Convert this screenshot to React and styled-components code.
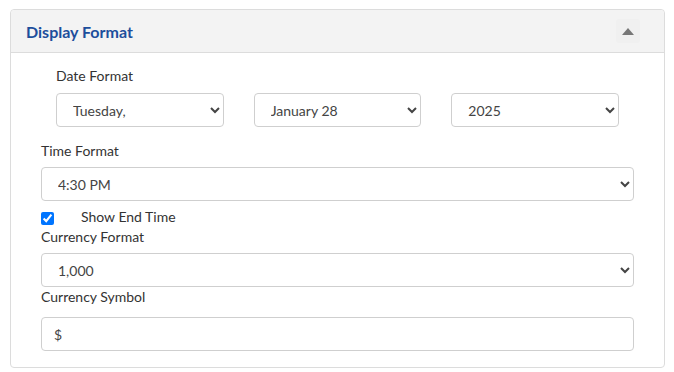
import React, { useState } from 'react'
import styled, { createGlobalStyle } from 'styled-components'

const GlobalStyle = createGlobalStyle`
  body {
    margin: 0;
    background: #fff;
    font-family: Lato, "Liberation Sans", sans-serif;
    font-size: 14px;
    color: #333;
  }
`

const Page = styled.div`
  padding: 9px 9px 0 10px;
`

const Panel = styled.section`
  border: 1px solid #dcdcdc;
  border-radius: 4px;
  background: #fff;
`

const Header = styled.header`
  display: flex;
  align-items: center;
  justify-content: space-between;
  height: 42px;
  padding: 0 24px 0 15px;
  background: #f3f3f3;
  border-bottom: 1px solid #dcdcdc;
  border-radius: 4px 4px 0 0;
`

const Title = styled.h2`
  margin: 0;
  font-size: 16px;
  font-weight: 700;
  color: #1d4e9c;
`

const Toggle = styled.button`
  display: flex;
  align-items: center;
  justify-content: center;
  width: 24px;
  height: 24px;
  padding: 0;
  border: none;
  border-radius: 3px;
  background: #f0f0f0;
  cursor: pointer;
`

const Body = styled.div`
  padding: 13px 30px 16px 30px;
`

const Label = styled.label`
  display: block;
  line-height: 20px;
  color: #333;
  margin-top: ${p => p.$top || 0}px;
  margin-bottom: ${p => p.$bottom || 0}px;
`

const DateBlock = styled.div`
  padding: 0 15px;
`

const DateRow = styled.div`
  display: grid;
  grid-template-columns: repeat(3, 1fr);
  column-gap: 30px;
`

const Select = styled.select`
  display: block;
  width: 100%;
  height: 34px;
  padding: 6px 12px;
  border: 1px solid #cfcfcf;
  border-radius: 4px;
  background: #fff;
  font-family: Lato, "Liberation Sans", sans-serif;
  font-size: 14px;
  color: #444;
  box-sizing: border-box;
`

const Input = styled.input`
  display: block;
  width: 100%;
  height: 34px;
  padding: 6px 12px;
  border: 1px solid #cfcfcf;
  border-radius: 4px;
  background: #fff;
  font-family: Lato, "Liberation Sans", sans-serif;
  font-size: 14px;
  color: #444;
  box-sizing: border-box;
`

const CheckRow = styled.label`
  display: flex;
  align-items: center;
  height: 20px;
  margin-top: 6px;
  line-height: 20px;
  color: #333;

  input {
    width: 13px;
    height: 13px;
    margin: 2px 27px 0 0;
    accent-color: #0075ff;
  }
`

export default function App() {
  const [showEnd, setShowEnd] = useState(true)

  return (
    <Page>
      <GlobalStyle />
      <Panel>
        <Header>
          <Title>Display Format</Title>
          <Toggle aria-label="Collapse">
            <svg width="12" height="7" viewBox="0 0 12 7">
              <polygon points="6,0 12,7 0,7" fill="#777" />
            </svg>
          </Toggle>
        </Header>
        <Body>
          <DateBlock>
            <Label $bottom={7}>Date Format</Label>
            <DateRow>
              <Select defaultValue="tue">
                <option value="tue">Tuesday,</option>
              </Select>
              <Select defaultValue="jan">
                <option value="jan">January 28</option>
              </Select>
              <Select defaultValue="2025">
                <option value="2025">2025</option>
              </Select>
            </DateRow>
          </DateBlock>

          <Label $top={14} $bottom={6}>Time Format</Label>
          <Select defaultValue="12">
            <option value="12">4:30 PM</option>
          </Select>

          <CheckRow>
            <input
              type="checkbox"
              checked={showEnd}
              onChange={e => setShowEnd(e.target.checked)}
            />
            Show End Time
          </CheckRow>

          <Label $bottom={6}>Currency Format</Label>
          <Select defaultValue="comma">
            <option value="comma">1,000</option>
          </Select>

          <Label $bottom={10}>Currency Symbol</Label>
          <Input defaultValue="$" />
        </Body>
      </Panel>
    </Page>
  )
}
